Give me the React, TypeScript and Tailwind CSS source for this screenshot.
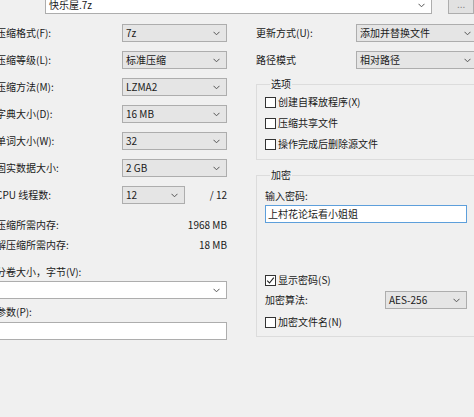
import React from "react";

const Chevron = () => (
  <svg width="7" height="5" viewBox="0 0 7 5" className="shrink-0">
    <path d="M0.5 0.8 L3.5 3.8 L6.5 0.8" fill="none" stroke="#555" strokeWidth="1" />
  </svg>
);

function Combo({ text, cls }: { text: string; cls: string }) {
  return (
    <div className={"flex items-center justify-between h-[18px] border pl-[3px] pr-[6px] " + cls}>
      <span className="whitespace-nowrap">{text}</span>
      <Chevron />
    </div>
  );
}

function Row({ label, value }: { label: string; value: string }) {
  return (
    <div className="flex items-center h-[18px]">
      <span className="w-[126px] whitespace-nowrap">{label}</span>
      <Combo text={value} cls="w-[105px] bg-[#e5e5e5] border-[#adadad]" />
    </div>
  );
}

function Check({ label, checked }: { label: string; checked?: boolean }) {
  return (
    <div className="flex items-center h-[14px] gap-[2px]">
      <div className="w-[11px] h-[11px] border border-[#333] bg-white flex items-center justify-center">
        {checked && (
          <svg width="9" height="9" viewBox="0 0 9 9">
            <path d="M1.2 4.6 L3.5 7 L7.8 1.6" fill="none" stroke="#222" strokeWidth="1.1" />
          </svg>
        )}
      </div>
      <span className="whitespace-nowrap">{label}</span>
    </div>
  );
}

export default function App() {
  return (
    <div
      className="relative w-[474px] h-[417px] overflow-hidden bg-[#f0f0f0] text-[10px] leading-[14px] text-[#1a1a1a]"
      style={{ fontFamily: '"Noto Sans CJK SC", "Noto Sans", sans-serif' }}
    >
      {/* top row */}
      <div className="flex h-[20px] mt-[-6px]">
        <div className="ml-[45px] w-[393px] h-[20px] border border-[#adadad] bg-white flex items-end justify-between pl-[3px] pr-[6px] pb-[1px]">
          <span>快乐屋.7z</span>
          <div className="pb-[4px]"><Chevron /></div>
        </div>
        <div className="ml-[16px] w-[26px] h-[20px] border border-[#adadad] bg-[#e1e1e1] flex items-end justify-center pb-[2px] text-[#888]">
          ...
        </div>
      </div>

      <div className="flex mt-[10px]">
        {/* left column */}
        <div className="ml-[-4px] w-[231px] shrink-0 flex flex-col">
          <div className="flex flex-col gap-[9px]">
            <Row label="压缩格式(F):" value="7z" />
            <Row label="压缩等级(L):" value="标准压缩" />
            <Row label="压缩方法(M):" value="LZMA2" />
            <Row label="字典大小(D):" value="16 MB" />
            <Row label="单词大小(W):" value="32" />
            <Row label="固实数据大小:" value="2 GB" />
            <div className="flex items-center h-[18px]">
              <span className="w-[126px] whitespace-nowrap">CPU 线程数:</span>
              <Combo text="12" cls="w-[63px] bg-[#e5e5e5] border-[#adadad]" />
              <span className="ml-auto">/ 12</span>
            </div>
          </div>
          <div className="flex justify-between h-[14px] mt-[14px]">
            <span>压缩所需内存:</span>
            <span>1968 MB</span>
          </div>
          <div className="flex justify-between h-[14px] mt-[6px]">
            <span>解压缩所需内存:</span>
            <span>18 MB</span>
          </div>
          <div className="h-[14px] mt-[13px]">分卷大小，字节(V):</div>
          <div className="mt-[2px]">
            <Combo text="" cls="w-[231px] bg-white border-[#adadad]" />
          </div>
          <div className="h-[14px] mt-[6px]">参数(P):</div>
          <div className="mt-[3px] h-[18px] w-[231px] border border-[#adadad] bg-white" />
        </div>

        {/* right column */}
        <div className="ml-[29px] w-[240px] shrink-0 flex flex-col">
          <div className="flex items-center h-[18px]">
            <span className="w-[100px] whitespace-nowrap">更新方式(U):</span>
            <Combo text="添加并替换文件" cls="w-[122px] bg-[#e5e5e5] border-[#adadad]" />
          </div>
          <div className="flex items-center h-[18px] mt-[9px]">
            <span className="w-[100px] whitespace-nowrap">路径模式</span>
            <Combo text="相对路径" cls="w-[122px] bg-[#e5e5e5] border-[#adadad]" />
          </div>

          <fieldset className="mt-[8px] border border-[#dcdcdc] pl-[8px] pt-[4px] pb-[8px] flex flex-col gap-[7px]">
            <legend className="ml-[5px] px-[1px] leading-[14px]">选项</legend>
            <Check label="创建自释放程序(X)" />
            <Check label="压缩共享文件" />
            <Check label="操作完成后删除源文件" />
          </fieldset>

          <fieldset className="mt-[8px] border border-[#dcdcdc] pl-[8px] pt-[7px] pb-[7px] flex flex-col">
            <legend className="ml-[5px] px-[1px] leading-[14px]">加密</legend>
            <div className="h-[14px]">输入密码:</div>
            <div className="mt-[2px] w-[202px] h-[18px] border border-[#5d9fdb] bg-white flex items-center pl-[2px]">
              上村花论坛看小姐姐
            </div>
            <div className="mt-[50px]">
              <Check label="显示密码(S)" checked />
            </div>
            <div className="mt-[4px] flex items-center h-[18px]">
              <span className="w-[120px]">加密算法:</span>
              <Combo text="AES-256" cls="w-[82px] bg-[#e5e5e5] border-[#adadad]" />
            </div>
            <div className="mt-[6px]">
              <Check label="加密文件名(N)" />
            </div>
          </fieldset>
        </div>
      </div>
    </div>
  );
}
